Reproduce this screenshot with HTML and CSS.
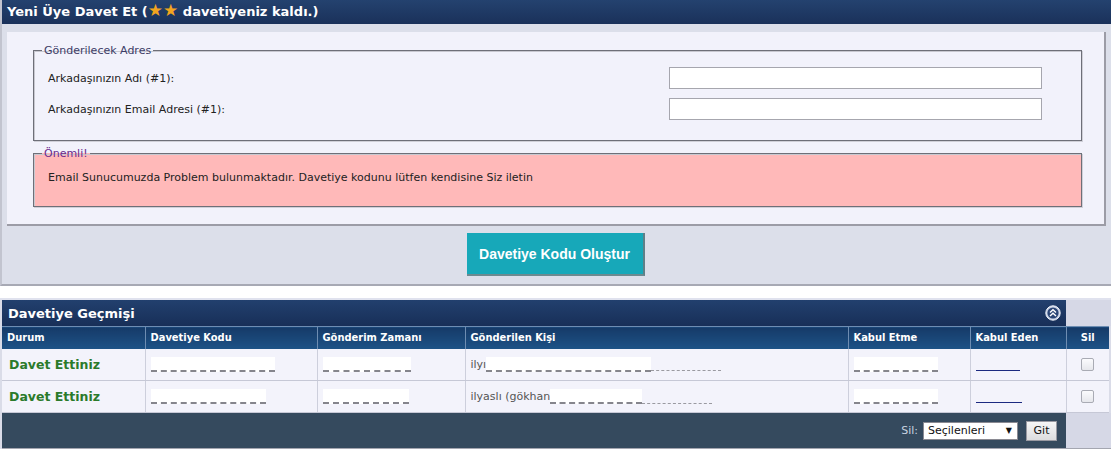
FILE: index.html
```html
<!DOCTYPE html>
<html lang="tr">
<head>
<meta charset="utf-8">
<title>Yeni Üye Davet Et</title>
<link rel="stylesheet" href="styles.css">
</head>
<body>
<div class="invite">
  <div class="bar-title">Yeni Üye Davet Et (<span class="stars">★★</span> davetiyeniz kaldı.)</div>
  <div class="invite-body">
    <div class="form-box">
      <fieldset class="fs fs-address">
        <legend>Gönderilecek Adres</legend>
        <div class="field-row"><label>Arkadaşınızın Adı (#1):</label><input class="txt" type="text"></div>
        <div class="field-row"><label>Arkadaşınızın Email Adresi (#1):</label><input class="txt" type="text"></div>
      </fieldset>
      <fieldset class="fs fs-alert">
        <legend>Önemli!</legend>
        <p class="alert-text">Email Sunucumuzda Problem bulunmaktadır. Davetiye kodunu lütfen kendisine Siz iletin</p>
      </fieldset>
    </div>
    <div class="btn-row"><button class="btn-create" type="button">Davetiye Kodu Oluştur</button></div>
  </div>
</div>

<div class="history">
  <div class="hist-title">
    <div class="hist-title-main">
      <span>Davetiye Geçmişi</span>
      <svg class="collapse" width="16" height="16" viewBox="0 0 16 16">
        <circle cx="8" cy="8" r="7.2" fill="#c9d3e6" stroke="#eef2fa" stroke-width="1"/>
        <circle cx="8" cy="8" r="5.6" fill="#2b4676"/>
        <path d="M5 7.6 L8 4.8 L11 7.6 M5 11 L8 8.2 L11 11" fill="none" stroke="#fff" stroke-width="1.4"/>
      </svg>
    </div>
    <div class="hist-side"></div>
  </div>
  <table class="grid">
    <colgroup>
      <col class="c-durum"><col class="c-kod"><col class="c-zaman"><col class="c-kisi"><col class="c-kabul"><col class="c-eden"><col class="c-sil">
    </colgroup>
    <thead>
      <tr>
        <th>Durum</th>
        <th>Davetiye Kodu</th>
        <th>Gönderim Zamanı</th>
        <th>Gönderilen Kişi</th>
        <th>Kabul Etme</th>
        <th>Kabul Eden</th>
        <th class="th-sil">Sil</th>
      </tr>
    </thead>
    <tbody>
      <tr>
        <td class="status">Davet Ettiniz</td>
        <td><span class="redact w124"></span></td>
        <td><span class="redact w88"></span></td>
        <td><span class="frag">ilyı</span><span class="redact w165"></span><span class="tail w70"></span></td>
        <td><span class="redact w84"></span></td>
        <td><span class="link-red w44"></span></td>
        <td class="center"><span class="chk"></span></td>
      </tr>
      <tr>
        <td class="status">Davet Ettiniz</td>
        <td><span class="redact w115"></span></td>
        <td><span class="redact w86"></span></td>
        <td><span class="frag">ilyaslı (gökhan</span><span class="redact w92"></span><span class="tail w70"></span></td>
        <td><span class="redact w84"></span></td>
        <td><span class="link-red w46"></span></td>
        <td class="center"><span class="chk"></span></td>
      </tr>
    </tbody>
  </table>
  <div class="hist-foot">
    <div class="foot-main">
      <span class="foot-label">Sil:</span>
      <span class="fake-select">Seçilenleri<span class="arrow">▼</span></span>
      <button class="btn-git" type="button">Git</button>
    </div>
    <div class="hist-side"></div>
  </div>
</div>
</body>
</html>
```

FILE: styles.css
```css
html, body {
  margin: 0;
  padding: 0;
  background: #ffffff;
}
body {
  width: 1111px;
  height: 452px;
  overflow: hidden;
  font-family: "DejaVu Sans", Verdana, sans-serif;
  font-size: 11px;
  color: #222;
}

/* ---------- invite panel ---------- */
.invite {
  background: #dcdfea;
  border-left: 2px solid #c2c4cf;
  border-bottom: 2px solid #a7a9b4;
}
.bar-title {
  height: 24px;
  line-height: 24px;
  padding-left: 5px;
  background: linear-gradient(#24426f, #1a315a);
  color: #fff;
  font-weight: bold;
  font-size: 13px;
}
.stars {
  color: #f3a51f;
  font-size: 17px;
  line-height: 20px;
}
.invite-body {
  padding: 8px 5px 8px 5px;
}
.form-box {
  background: #f2f2fb;
  border-right: 2px solid #9c9ca6;
  border-bottom: 2px solid #9c9ca6;
  padding: 12px 22px 17px 26px;
}
.fs {
  margin: 0;
  padding: 10px 0 20px 8px;
  border: 1px solid #6e6f78;
  box-shadow: inset 1px 1px 0 #c8c8d0, 1px 1px 0 #d0d0d8;
}
.fs legend {
  padding: 0 2px;
  font-size: 11px;
  line-height: 13px;
  color: #3c3c66;
}
.fs-address {
  display: flex;
  flex-direction: column;
  gap: 9px;
}
.field-row {
  display: grid;
  grid-template-columns: 621px 373px;
  align-items: center;
  margin-left: 6px;
}
.field-row label {
  font-size: 11px;
  color: #222;
}
.txt {
  box-sizing: border-box;
  width: 373px;
  height: 22px;
  margin: 0;
  border: 1px solid #a6a6ae;
  background: #fff;
}
.fs-alert {
  margin-top: 6px;
  background: #ffb9b9;
  padding: 11px 0 22px 8px;
}
.fs-alert legend {
  color: #6a2a8e;
}
.alert-text {
  margin: 0 0 0 6px;
  line-height: 13px;
  font-size: 11px;
  color: #222;
}
.btn-row {
  display: flex;
  justify-content: center;
  padding-top: 7px;
  padding-right: 2px;
}
.btn-create {
  width: 178px;
  height: 43px;
  margin: 0;
  background: #17a8b9;
  border: none;
  border-right: 2px solid #5e8088;
  border-bottom: 2px solid #6c8a90;
  color: #fff;
  font-family: "Liberation Sans", Arial, sans-serif;
  font-weight: bold;
  font-size: 14px;
  padding: 0;
}

/* ---------- history ---------- */
.history {
  margin-top: 12px;
  border-top: 2px solid #e0e2ee;
  background: #dadce8;
  padding-left: 2px;
}
.hist-title {
  display: flex;
  height: 26px;
}
.hist-title-main {
  width: 1064px;
  display: flex;
  align-items: center;
  justify-content: space-between;
  padding: 0 5px 0 6px;
  box-sizing: border-box;
  background: linear-gradient(#22406e, #182f58);
  color: #fff;
  font-weight: bold;
  font-size: 13px;
}
.hist-side {
  flex: 1;
  background: #d6d8e6;
}
.grid {
  border-collapse: collapse;
  width: 1107px;
  table-layout: fixed;
}
.c-durum { width: 143px; }
.c-kod { width: 172px; }
.c-zaman { width: 148px; }
.c-kisi { width: 383px; }
.c-kabul { width: 122px; }
.c-eden { width: 96px; }
.c-sil { width: 43px; }

.grid th {
  box-sizing: border-box;
  height: 22px;
  padding: 0 0 0 5px;
  text-align: left;
  color: #fff;
  font-family: "DejaVu Sans Condensed", "DejaVu Sans", sans-serif;
  font-stretch: condensed;
  font-size: 11px;
  font-weight: bold;
  white-space: nowrap;
  background: linear-gradient(#163a68, #1d5387);
  border-left: 1px solid #6e8db2;
  border-top: 1px solid #6e8db2;
}
.grid th:first-child { border-left: none; }
.grid th.th-sil { text-align: center; padding: 0; }

.grid td {
  box-sizing: border-box;
  height: 32px;
  padding: 0 0 0 5px;
  background: #f3f3fb;
  border-left: 1px solid #cdcfdc;
  border-bottom: 1px solid #c6c8d6;
  white-space: nowrap;
  overflow: hidden;
}
.grid td:first-child { border-left: none; }
.grid td.status {
  padding-left: 7px;
  color: #2b7a2b;
  font-weight: bold;
  font-size: 12.5px;
}
.grid td.center { text-align: center; padding: 0; }

.redact {
  display: inline-block;
  vertical-align: middle;
  height: 13px;
  background: #ffffff;
  border-bottom: 2px dashed #85858c;
}
.tail {
  display: inline-block;
  vertical-align: middle;
  height: 13px;
  border-bottom: 1px dashed #9a9aa0;
}
.frag {
  vertical-align: middle;
  color: #555;
  font-size: 11px;
}
.link-red {
  display: inline-block;
  vertical-align: middle;
  height: 12px;
  border-bottom: 1px solid #1c2a80;
}
.w44 { width: 44px; }
.w46 { width: 46px; }
.w70 { width: 70px; }
.w84 { width: 84px; }
.w86 { width: 86px; }
.w88 { width: 88px; }
.w92 { width: 92px; }
.w115 { width: 115px; }
.w124 { width: 124px; }
.w165 { width: 165px; }

.chk {
  display: inline-block;
  width: 11px;
  height: 11px;
  border: 1px solid #a9abb4;
  border-radius: 2px;
  background: linear-gradient(#fbfbfd, #e6e7ec);
  vertical-align: middle;
}

.hist-foot {
  display: flex;
  height: 35px;
  border-bottom: 1px solid #a4a6b0;
}
.foot-main {
  width: 1064px;
  background: #354a5e;
  display: flex;
  align-items: center;
  justify-content: flex-end;
  padding-right: 9px;
  box-sizing: border-box;
}
.foot-label {
  color: #c9d3e0;
  font-size: 11px;
  margin-right: 5px;
}
.fake-select {
  box-sizing: border-box;
  width: 95px;
  height: 18px;
  display: flex;
  align-items: center;
  justify-content: space-between;
  padding: 0 5px 0 4px;
  background: #fff;
  border: 1px solid #8a8a92;
  font-size: 11px;
  color: #111;
}
.arrow {
  font-size: 8px;
  color: #111;
}
.btn-git {
  margin: 0 0 0 8px;
  width: 31px;
  height: 20px;
  padding: 0;
  border: 1px solid #9a9aa2;
  background: linear-gradient(#f6f6f6, #dcdcde);
  font-family: "DejaVu Sans", Verdana, sans-serif;
  font-size: 11px;
  color: #111;
}
```
